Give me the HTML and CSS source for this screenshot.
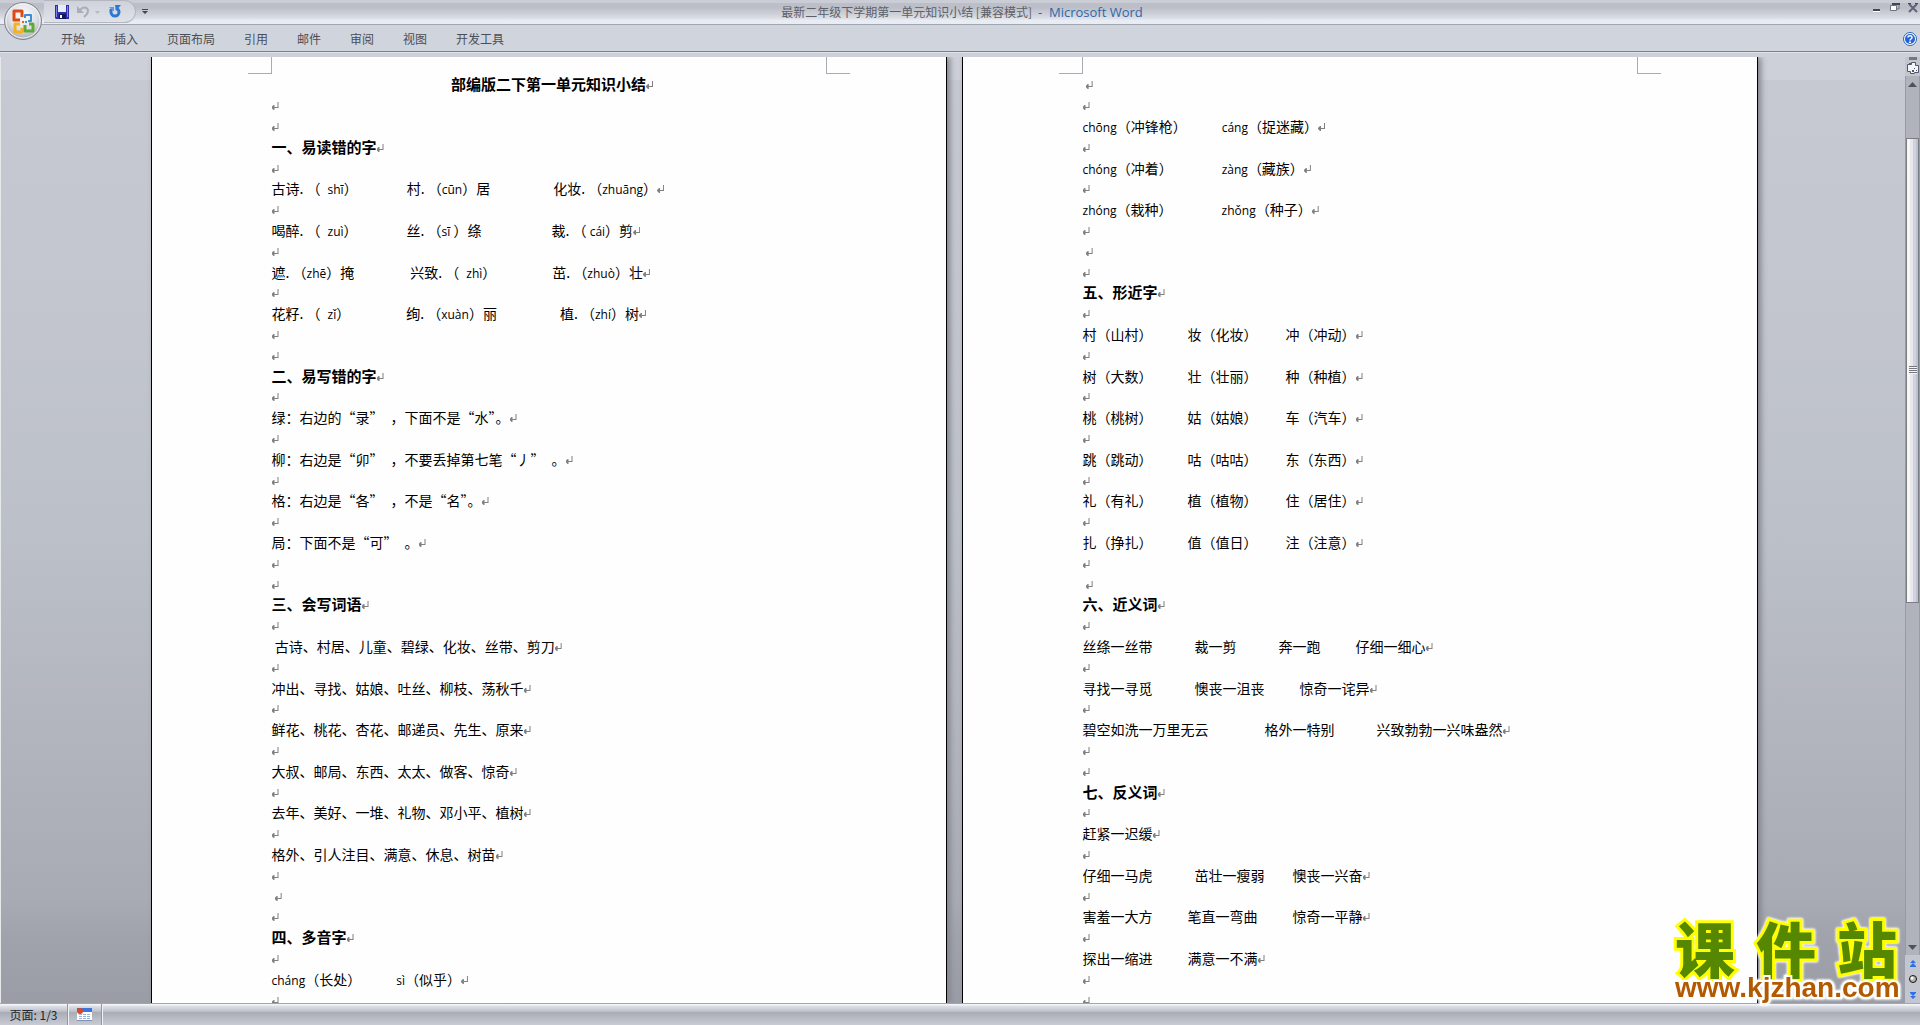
FILE: index.html
```html
<!DOCTYPE html>
<html lang="zh-CN">
<head>
<meta charset="utf-8">
<title>最新二年级下学期第一单元知识小结 - Microsoft Word</title>
<link rel="stylesheet" href="styles.css">
</head>
<body>
<header class="chrome">
  <button class="orb" aria-label="Office">
    <svg viewBox="0 0 40 40" width="40" height="40">
      <defs>
        <radialGradient id="orb" cx="50%" cy="35%" r="65%"><stop offset="0" stop-color="#fff"/><stop offset=".6" stop-color="#dcdfe5"/><stop offset="1" stop-color="#a4a8b0"/></radialGradient>
      </defs>
      <circle cx="20" cy="20" r="18.5" fill="url(#orb)" stroke="#83868e"/>
      <circle cx="20" cy="20" r="17" fill="none" stroke="#f4f5f8"/>
      <g fill="none" stroke-width="3" stroke-linejoin="round">
        <path d="M17 19h-6v-9h8v6" stroke="#dd4a12"/>
        <path d="M22 17v-3h6v6h-3" stroke="#3f8fd0" stroke-width="2"/>
        <path d="M17 23h-5v8h7v-4" stroke="#f5b21c"/>
        <path d="M22 24v6h8v-7h-4" stroke="#5fa93a"/>
      </g>
      <path d="M19 20h2v2h-2z" fill="#e0641a"/>
      <path d="M22 20h2v2h-2z" fill="#4a90d0"/>
    </svg>
  </button>
  <div class="titlebar">
    <div class="quick">
      <button aria-label="保存">
        <svg viewBox="0 0 14 14" width="14" height="14"><path d="M0 0h14v14H1l-1-1z" fill="#2d2fa8"/><path d="M3 0h8v7H3z" fill="#e6ecfa"/><path d="M1 1h1v11H1zM12 1h1v11h-1z" fill="#7d84e0"/><path d="M4 9h7v5H4z" fill="#17184f"/><path d="M5 10h2v3H5z" fill="#fff"/></svg>
      </button>
      <button class="undo" aria-label="撤消">
        <svg viewBox="0 0 24 14" width="24" height="14"><path d="M3 5c3-4 8-3 8 1 0 3-2 4-4 6" fill="none" stroke="#a9adb8" stroke-width="2"/><path d="M0 1v7h7z" fill="#a9adb8"/><path d="M18 6h5l-2.500 3z" fill="#b4b8c2"/></svg>
      </button>
      <button class="redo" aria-label="恢复">
        <svg viewBox="0 0 14 14" width="14" height="14"><path d="M3 4v3a4 4 0 0 0 8 0c0-2-1-3-3-4" fill="none" stroke="#2f78d2" stroke-width="3"/><path d="M1 2h5v4H5z" fill="#5a9be6"/><path d="M7 0h6L8 6z" fill="#2f78d2"/></svg>
      </button>
    </div>
    <button class="more" aria-label="自定义快速访问工具栏">
      <svg viewBox="0 0 6 6" width="6" height="6"><path d="M0 0h6v1H0zM0 2h6L3 5z" fill="#44474e"/></svg>
    </button>
    <h1 class="caption">最新二年级下学期第一单元知识小结 [兼容模式] <span class="app">&nbsp;-&nbsp; Microsoft Word</span></h1>
    <div class="winbtns">
      <button aria-label="最小化"><svg viewBox="0 0 10 12" width="10" height="12"><path d="M1 8h7v2H1z" fill="#43474f"/><path d="M1 10h7v1H1z" fill="#fff"/></svg></button>
      <button aria-label="还原"><svg viewBox="0 0 10 12" width="10" height="12"><path d="M2 3h7v5H7" fill="none" stroke="#6b7384"/><path d="M2 2h8v2H2z" fill="#43474f"/><path d="M.5 4.500h6v5h-6z" fill="#fff" stroke="#6b7384"/></svg></button>
      <button aria-label="关闭"><svg viewBox="0 0 10 12" width="10" height="12"><path d="M1 3l8 8M9 3l-8 8" stroke="#5d6577" stroke-width="2"/><path d="M0 2h3v1H0zM7 2h3v1H7z" fill="#43474f"/></svg></button>
    </div>
  </div>
  <nav class="ribbon">
    <button>开始</button><button>插入</button><button>页面布局</button><button>引用</button><button>邮件</button><button>审阅</button><button>视图</button><button>开发工具</button>
    <button class="help" aria-label="帮助"><svg viewBox="0 0 14 14" width="14" height="14"><circle cx="7" cy="7" r="6.500" fill="#fff" stroke="#2c62b4"/><circle cx="7" cy="7" r="5" fill="#2563d8"/><path d="M5 5.500c0-2.500 4-2.500 4 0C9 7 7 7 7 8.500" fill="none" stroke="#fff" stroke-width="1.500"/><path d="M6 9.500h2v1.500H6z" fill="#fff"/></svg></button>
  </nav>
</header>

<main class="workspace">
  <div class="pages">
    <article class="page">
      <div class="corners"></div>
      <div class="text">
        <h2 class="title">部编版二下第一单元知识小结</h2>
        <p></p>
        <p></p>
        <h3>一、易读错的字</h3>
        <p></p>
        <p>古诗.&nbsp;（&ensp;<i>shī</i>）&ensp;&ensp;&ensp;&ensp;&ensp;&ensp;&ensp;村.&nbsp;（<i>cūn</i>）居&ensp;&ensp;&ensp;&ensp;&ensp;&ensp;&ensp;&ensp;&ensp;化妆.&nbsp;（<i>zhuāng</i>）</p>
        <p></p>
        <p>喝醉.&nbsp;（&ensp;<i>zuì</i>）&ensp;&ensp;&ensp;&ensp;&ensp;&ensp;&ensp;丝.&nbsp;（<i>sī</i>&nbsp;）绦&ensp;&ensp;&ensp;&ensp;&ensp;&ensp;&ensp;&ensp;&ensp;&ensp;裁.&nbsp;（&nbsp;<i>cái</i>）剪</p>
        <p></p>
        <p>遮.&nbsp;（<i>zhē</i>）掩&ensp;&ensp;&ensp;&ensp;&ensp;&ensp;&ensp;&ensp;兴致.&nbsp;（&ensp;<i>zhì</i>）&ensp;&ensp;&ensp;&ensp;&ensp;&ensp;&ensp;&ensp;茁.&nbsp;（<i>zhuò</i>）壮</p>
        <p></p>
        <p>花籽.&nbsp;（&ensp;<i>zǐ</i>）&ensp;&ensp;&ensp;&ensp;&ensp;&ensp;&ensp;&ensp;绚.&nbsp;（<i>xuàn</i>）丽&ensp;&ensp;&ensp;&ensp;&ensp;&ensp;&ensp;&ensp;&ensp;植.&nbsp;（<i>zhí</i>）树</p>
        <p></p>
        <p></p>
        <h3>二、易写错的字</h3>
        <p></p>
        <p>绿：右边的“录”&ensp;，下面不是“水”。</p>
        <p></p>
        <p>柳：右边是“卯”&ensp;，不要丢掉第七笔“丿”&ensp;。</p>
        <p></p>
        <p>格：右边是“各”&ensp;，不是“名”。</p>
        <p></p>
        <p>局：下面不是“可”&ensp;。</p>
        <p></p>
        <p></p>
        <h3>三、会写词语</h3>
        <p></p>
        <p>&nbsp;古诗、村居、儿童、碧绿、化妆、丝带、剪刀</p>
        <p></p>
        <p>冲出、寻找、姑娘、吐丝、柳枝、荡秋千</p>
        <p></p>
        <p>鲜花、桃花、杏花、邮递员、先生、原来</p>
        <p></p>
        <p>大叔、邮局、东西、太太、做客、惊奇</p>
        <p></p>
        <p>去年、美好、一堆、礼物、邓小平、植树</p>
        <p></p>
        <p>格外、引人注目、满意、休息、树苗</p>
        <p></p>
        <p>&nbsp;</p>
        <p></p>
        <h3>四、多音字</h3>
        <p></p>
        <p><i>cháng</i>（长处）&ensp;&ensp;&ensp;&ensp;&ensp;<i>sì</i>（似乎）</p>
        <p></p>
      </div>
    </article>
    <article class="page">
      <div class="corners"></div>
      <div class="text">
        <p>&nbsp;</p>
        <p></p>
        <p><i>chōng</i>（冲锋枪）&ensp;&ensp;&ensp;&ensp;&ensp;<i>cáng</i>（捉迷藏）</p>
        <p></p>
        <p><i>chóng</i>（冲着）&ensp;&ensp;&ensp;&ensp;&ensp;&ensp;&ensp;<i>zàng</i>（藏族）</p>
        <p></p>
        <p><i>zhóng</i>（栽种）&ensp;&ensp;&ensp;&ensp;&ensp;&ensp;&ensp;<i>zhǒng</i>（种子）</p>
        <p></p>
        <p>&nbsp;</p>
        <p></p>
        <h3>五、形近字</h3>
        <p></p>
        <p>村（山村）&ensp;&ensp;&ensp;&ensp;&ensp;妆（化妆）&ensp;&ensp;&ensp;&ensp;冲（冲动）</p>
        <p></p>
        <p>树（大数）&ensp;&ensp;&ensp;&ensp;&ensp;壮（壮丽）&ensp;&ensp;&ensp;&ensp;种（种植）</p>
        <p></p>
        <p>桃（桃树）&ensp;&ensp;&ensp;&ensp;&ensp;姑（姑娘）&ensp;&ensp;&ensp;&ensp;车（汽车）</p>
        <p></p>
        <p>跳（跳动）&ensp;&ensp;&ensp;&ensp;&ensp;咕（咕咕）&ensp;&ensp;&ensp;&ensp;东（东西）</p>
        <p></p>
        <p>礼（有礼）&ensp;&ensp;&ensp;&ensp;&ensp;植（植物）&ensp;&ensp;&ensp;&ensp;住（居住）</p>
        <p></p>
        <p>扎（挣扎）&ensp;&ensp;&ensp;&ensp;&ensp;值（值日）&ensp;&ensp;&ensp;&ensp;注（注意）</p>
        <p></p>
        <p>&nbsp;</p>
        <h3>六、近义词</h3>
        <p></p>
        <p>丝绦一丝带&ensp;&ensp;&ensp;&ensp;&ensp;&ensp;裁一剪&ensp;&ensp;&ensp;&ensp;&ensp;&ensp;奔一跑&ensp;&ensp;&ensp;&ensp;&ensp;仔细一细心</p>
        <p></p>
        <p>寻找一寻觅&ensp;&ensp;&ensp;&ensp;&ensp;&ensp;懊丧一沮丧&ensp;&ensp;&ensp;&ensp;&ensp;惊奇一诧异</p>
        <p></p>
        <p>碧空如洗一万里无云&ensp;&ensp;&ensp;&ensp;&ensp;&ensp;&ensp;&ensp;格外一特别&ensp;&ensp;&ensp;&ensp;&ensp;&ensp;兴致勃勃一兴味盎然</p>
        <p></p>
        <p></p>
        <h3>七、反义词</h3>
        <p></p>
        <p>赶紧一迟缓</p>
        <p></p>
        <p>仔细一马虎&ensp;&ensp;&ensp;&ensp;&ensp;&ensp;茁壮一瘦弱&ensp;&ensp;&ensp;&ensp;懊丧一兴奋</p>
        <p></p>
        <p>害羞一大方&ensp;&ensp;&ensp;&ensp;&ensp;笔直一弯曲&ensp;&ensp;&ensp;&ensp;&ensp;惊奇一平静</p>
        <p></p>
        <p>探出一缩进&ensp;&ensp;&ensp;&ensp;&ensp;满意一不满</p>
        <p></p>
        <p></p>
      </div>
    </article>
  </div>
  <aside class="scroll">
    <div class="split"></div>
    <button class="ruler" aria-label="标尺"><svg viewBox="0 0 14 14" width="14" height="14"><path d="M1.500 3.500h4v-2h4v3h3v7h-4v1h-4v-2h-3z" fill="#f4f5f8" stroke="#51586a"/><path d="M3 2h2v2H3zM8 7h1v1H8zM6 9h2v2H6zM10 9h1v1h-1z" fill="#51586a"/></svg></button>
    <div class="track">
      <button aria-label="向上滚动"><svg viewBox="0 0 9 5" width="9" height="5"><path d="M0 5h9L4.500 0z" fill="#4d525b"/></svg></button>
      <div class="lane"><div class="thumb"></div></div>
      <button aria-label="向下滚动"><svg viewBox="0 0 9 5" width="9" height="5"><path d="M0 0h9L4.500 5z" fill="#4d525b"/></svg></button>
    </div>
    <div class="browse">
      <button aria-label="前一页"><svg viewBox="0 0 6 7" width="6" height="7"><path d="M0 3l3-3 3 3zM0 6l3-3 3 3v1H0z" fill="#2f6ee8"/></svg></button>
      <button aria-label="选择浏览对象"><svg viewBox="0 0 8 8" width="8" height="8"><circle cx="4" cy="4" r="3.500" fill="#b5b5a8" stroke="#111"/><circle cx="3" cy="3" r="1.500" fill="#fff"/></svg></button>
      <button aria-label="下一页"><svg viewBox="0 0 6 7" width="6" height="7"><path d="M0 4l3 3 3-3zM0 1l3 3 3-3V0H0z" fill="#2f6ee8"/></svg></button>
    </div>
  </aside>
</main>

<footer class="status">
  <button class="count">页面: 1/3</button>
  <button class="macro" aria-label="录制宏"><svg viewBox="0 0 15 13" width="15" height="13"><path d="M0 0h15v13H0z" fill="#fdfeff"/><path d="M0 0h15v4H0z" fill="#3b74dc"/><path d="M2 6h3v1H2zM6 6h3v1H6zM10 6h3v1h-3zM2 8h3v1H2zM6 8h3v1H6zM10 8h3v1h-3zM2 10h3v1H2zM6 10h3v1H6zM10 10h3v1h-3z" fill="#9fb2d8"/><path d="M0 12h15v1H0z" fill="#7d90b8"/><circle cx="3" cy="3" r="3" fill="#d9482a"/></svg></button>
</footer>

<div class="watermark">
  <div class="brand"><span>课</span><span>件</span><span>站</span></div>
  <a class="site" href="#">www.kjzhan.com</a>
</div>
</body>
</html>
```

FILE: styles.css
```css
* { box-sizing: border-box; }

body {
  margin: 0;
  height: 100vh;
  display: flex;
  flex-direction: column;
  overflow: hidden;
  position: relative;
  background: #cdd0d9;
  font-family: "Noto Sans CJK SC", sans-serif;
  font-size: 12px;
}

button {
  display: flex;
  align-items: center;
  justify-content: center;
  padding: 0;
  border: 0;
  background: none;
  font: inherit;
  color: inherit;
}

svg { display: block; }

/* Title bar and ribbon */
.chrome { position: relative; }

.orb {
  position: absolute;
  left: 3px;
  top: 1px;
}

.titlebar {
  display: flex;
  align-items: flex-start;
  height: 25px;
  padding-left: 44px;
  border-bottom: 1px solid #a3a7b0;
  background: linear-gradient(#caccd6 0 3px, #bcbfc8 3px 8px, #c6c9d1 11px, #d0d3da 15px, #dfe2e8 19px, #e8ecf4 20px);
}

.quick {
  display: flex;
  align-items: center;
  width: 92px;
  height: 23px;
  padding-left: 11px;
  border: 1px solid #b3b7c0;
  border-width: 1px 1px 1px 0;
  border-radius: 0 12px 12px 0;
  background: linear-gradient(#cfd2da, #dfe2e9);
}

.undo { margin-left: 8px; }
.redo { margin-left: 7px; }
.more { width: 18px; height: 23px; }

.caption {
  flex: 1;
  margin: 0;
  text-align: center;
  font-size: 12px;
  font-weight: 400;
  line-height: 24px;
  color: #5c606a;
}

.app {
  font-family: "Open Sans", sans-serif;
  font-size: 13px;
  color: #2f68a8;
}

.winbtns {
  display: flex;
  justify-content: flex-end;
  gap: 8px;
  width: 150px;
  padding: 1px 2px 0 0;
}

.ribbon {
  display: flex;
  align-items: center;
  gap: 29px;
  height: 32px;
  padding: 0 3px 5px 61px;
  background: linear-gradient(#d0d4dd 26px, #7d8088 26px 27px, #dfe2e8 27px 28px, #cdd0d8 28px);
  color: #4a4e58;
}

.help { margin-left: auto; }

/* Document area */
.workspace {
  flex: 1;
  min-height: 0;
  display: flex;
  border-left: 1px solid #e6e8ec;
  background: linear-gradient(#cdd0d9 23px, #c6c9d2 23px, #c3c6cf 26%, #bcc0c8 50%, #b0b3bc 75%, #a8abb4 89%, #a0a3ab 93%, #9a9da5);
}

.pages {
  flex: 1;
  display: flex;
  justify-content: center;
  gap: 15px;
  padding-left: 2px;
  overflow: hidden;
}

.page {
  width: 796px;
  border: solid #000;
  border-width: 0 1px;
  background: #fefefe;
  box-shadow: 3px 0 6px #80838b;
  overflow: hidden;
}

.corners {
  height: 17px;
  margin: 0 96px;
  background:
    linear-gradient(#a9acb4, #a9acb4) 0 100% / 24px 1px,
    linear-gradient(#a9acb4, #a9acb4) 23px 0 / 1px 100%,
    linear-gradient(#a9acb4, #a9acb4) 100% 100% / 24px 1px,
    linear-gradient(#a9acb4, #a9acb4) calc(100% - 23px) 0 / 1px 100%;
  background-repeat: no-repeat;
}

.text {
  display: grid;
  grid-auto-rows: 21px 21px 21px 21px 20px;
  padding: 0 120px;
  color: #000;
}

.text > * {
  margin: 0;
  font-size: 14px;
  line-height: 20px;
  white-space: pre;
}

.text > h2,
.text > h3 { font-size: 15px; font-weight: 700; }

.text > .title { text-align: center; }

/* Paragraph mark */
.text > *::after {
  content: "";
  display: inline-block;
  width: 7px;
  height: 8px;
  margin-right: -7px;
  vertical-align: 1px;
  background: #808080;
  clip-path: polygon(6px 0, 7px 0, 7px 6px, 3px 6px, 3px 8px, 2px 8px, 0 6px, 0 5px, 2px 3px, 3px 3px, 3px 5px, 6px 5px);
}

.text i {
  font-family: "Open Sans", sans-serif;
  font-size: 12px;
  font-style: normal;
  line-height: 12px;
}

/* Vertical scroll bar */
.scroll {
  display: flex;
  flex-direction: column;
  width: 15px;
  background: #c3c6ce;
}

.split { height: 3px; margin: 0 3px 0 4px; background: #74777e; }
.ruler { height: 16px; }

.track {
  flex: 1;
  display: flex;
  flex-direction: column;
  border: solid #989ba4;
  border-width: 0 1px;
  background: #b0b3bc;
}

.track button { height: 16px; }
.lane { flex: 1; padding-top: 46px; }

.thumb {
  height: 58%;
  border: 1px solid #7a7d85;
  background:
    repeating-linear-gradient(#74777e 0 1px, #f4f4f0 1px 2px) center / 8px 8px no-repeat,
    linear-gradient(90deg, #fbf7ec 0 3px, #e8e8f2 3px 6px, #d0d3de 6px 9px, #bfc2cb 9px);
}

.browse { display: flex; flex-direction: column; height: 48px; }
.browse button { flex: 1; }

/* Status bar */
.status {
  display: flex;
  height: 22px;
  border-top: 1px solid #a3a6af;
  background: linear-gradient(#f2f4f8 0 1px, #dfe2e8 2px, #b9bcc5 8px, #a9acb5 8px, #c8cbd3);
  color: #22252c;
}

.status button { border-right: 1px solid #94979f; box-shadow: 1px 0 #eef0f4; }
.count { width: 68px; }
.macro { width: 34px; }

/* Site watermark */
.watermark {
  position: absolute;
  right: 23px;
  bottom: 22px;
  width: 222px;
  filter: drop-shadow(0 0 1px #fff) drop-shadow(0 0 1px #fff);
}

.brand {
  display: flex;
  justify-content: space-between;
  font-size: 60px;
  font-weight: 900;
  line-height: 52px;
  color: #558800;
  -webkit-text-stroke: 6px #ffff00;
  paint-order: stroke fill;
}

.site {
  display: block;
  font: 700 28px/30px "Liberation Sans", sans-serif;
  color: #b35900;
  text-decoration: none;
  -webkit-text-stroke: 4px #fff;
  paint-order: stroke fill;
}
```
